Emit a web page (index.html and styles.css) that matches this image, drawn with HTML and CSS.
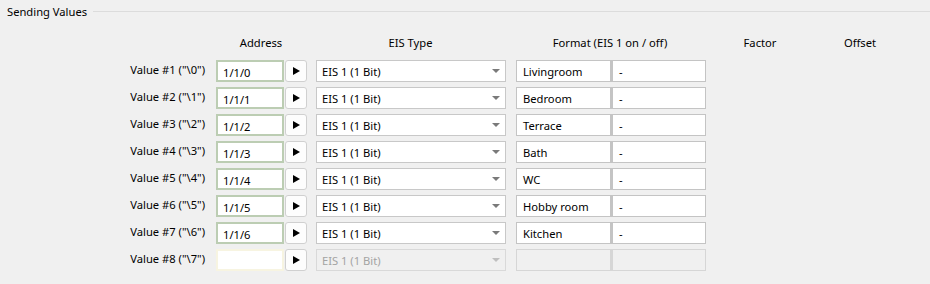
FILE: index.html
```html
<!DOCTYPE html>
<html lang="en">
<head>
  <meta charset="UTF-8">
  <title>Sending Values</title>
  <link rel="stylesheet" href="styles.css">
</head>
<body>
  <div class="group">
    <div class="group-title">
      <span>Sending Values</span>
      <div class="group-line"></div>
    </div>

    <div class="head-row">
      <div class="head-address">Address</div>
      <div class="head-eis">EIS Type</div>
      <div class="head-format">Format (EIS 1 on / off)</div>
      <div class="head-factor">Factor</div>
      <div class="head-offset">Offset</div>
    </div>

    <div class="row">
      <div class="label">Value #1 ("\0")</div>
      <div class="addr">1/1/0</div>
      <div class="send"><svg width="8" height="8" viewBox="0 0 8 8"><polygon points="1,0 8,4 1,8"/></svg></div>
      <div class="combo">EIS 1 (1 Bit)<span class="arrow"></span></div>
      <div class="fmt">Livingroom</div>
      <div class="fmt">-</div>
    </div>
    <div class="row">
      <div class="label">Value #2 ("\1")</div>
      <div class="addr">1/1/1</div>
      <div class="send"><svg width="8" height="8" viewBox="0 0 8 8"><polygon points="1,0 8,4 1,8"/></svg></div>
      <div class="combo">EIS 1 (1 Bit)<span class="arrow"></span></div>
      <div class="fmt">Bedroom</div>
      <div class="fmt">-</div>
    </div>
    <div class="row">
      <div class="label">Value #3 ("\2")</div>
      <div class="addr">1/1/2</div>
      <div class="send"><svg width="8" height="8" viewBox="0 0 8 8"><polygon points="1,0 8,4 1,8"/></svg></div>
      <div class="combo">EIS 1 (1 Bit)<span class="arrow"></span></div>
      <div class="fmt">Terrace</div>
      <div class="fmt">-</div>
    </div>
    <div class="row">
      <div class="label">Value #4 ("\3")</div>
      <div class="addr">1/1/3</div>
      <div class="send"><svg width="8" height="8" viewBox="0 0 8 8"><polygon points="1,0 8,4 1,8"/></svg></div>
      <div class="combo">EIS 1 (1 Bit)<span class="arrow"></span></div>
      <div class="fmt">Bath</div>
      <div class="fmt">-</div>
    </div>
    <div class="row">
      <div class="label">Value #5 ("\4")</div>
      <div class="addr">1/1/4</div>
      <div class="send"><svg width="8" height="8" viewBox="0 0 8 8"><polygon points="1,0 8,4 1,8"/></svg></div>
      <div class="combo">EIS 1 (1 Bit)<span class="arrow"></span></div>
      <div class="fmt">WC</div>
      <div class="fmt">-</div>
    </div>
    <div class="row">
      <div class="label">Value #6 ("\5")</div>
      <div class="addr">1/1/5</div>
      <div class="send"><svg width="8" height="8" viewBox="0 0 8 8"><polygon points="1,0 8,4 1,8"/></svg></div>
      <div class="combo">EIS 1 (1 Bit)<span class="arrow"></span></div>
      <div class="fmt">Hobby room</div>
      <div class="fmt">-</div>
    </div>
    <div class="row">
      <div class="label">Value #7 ("\6")</div>
      <div class="addr">1/1/6</div>
      <div class="send"><svg width="8" height="8" viewBox="0 0 8 8"><polygon points="1,0 8,4 1,8"/></svg></div>
      <div class="combo">EIS 1 (1 Bit)<span class="arrow"></span></div>
      <div class="fmt">Kitchen</div>
      <div class="fmt">-</div>
    </div>
    <div class="row">
      <div class="label">Value #8 ("\7")</div>
      <div class="addr empty"></div>
      <div class="send"><svg width="8" height="8" viewBox="0 0 8 8"><polygon points="1,0 8,4 1,8"/></svg></div>
      <div class="combo disabled">EIS 1 (1 Bit)<span class="arrow"></span></div>
      <div class="fmt disabled"></div>
      <div class="fmt disabled"></div>
    </div>
  </div>
</body>
</html>
```

FILE: styles.css
```css
body {
  margin: 0;
  background-color: #f0f0f0;
  font-family: "Noto Sans", "Open Sans", sans-serif;
  font-size: 11.2px;
  color: #000;
}

.group {
  padding-top: 3px;
}

.group-title {
  display: flex;
  align-items: center;
  height: 17px;
  padding-left: 7px;
}

.group-line {
  flex: 1;
  height: 1px;
  margin-left: 6px;
  background-color: #dcdcdc;
}

.head-row {
  display: flex;
  align-items: center;
  height: 20px;
  margin-top: 12px;
  margin-bottom: 8px;
  padding-left: 216px;
}

.head-address {
  width: 90px;
  text-align: center;
}

.head-eis {
  width: 189px;
  margin-left: 10px;
  text-align: center;
}

.head-format {
  width: 188px;
  margin-left: 11px;
  text-align: center;
}

.head-factor {
  width: 100px;
  margin-left: 6px;
  text-align: center;
}

.head-offset {
  width: 100px;
  text-align: center;
}

.row {
  display: flex;
  align-items: center;
  height: 22px;
  margin-bottom: 5px;
}

.label {
  width: 205px;
  padding-right: 11px;
  text-align: right;
  position: relative;
  top: -2px;
}

.addr {
  box-sizing: border-box;
  width: 68px;
  height: 22px;
  padding: 3px 0 0 5px;
  background-color: #fff;
  border: 2px solid #bccdb3;
}

.addr.empty {
  border-color: #f7f4e1;
}

.send {
  box-sizing: border-box;
  width: 22px;
  height: 22px;
  margin-left: 1px;
  display: flex;
  justify-content: center;
  align-items: center;
  background-color: #fdfdfd;
  border: 1px solid #d0d0d0;
  border-radius: 3px;
}

.combo {
  box-sizing: border-box;
  width: 190px;
  height: 22px;
  margin-left: 9px;
  padding: 3px 0 0 5px;
  background-color: #fff;
  border: 1px solid #c8c8c8;
  position: relative;
}

.arrow {
  position: absolute;
  right: 5px;
  top: 8px;
  border-left: 4px solid transparent;
  border-right: 4px solid transparent;
  border-top: 4px solid #7a7a7a;
}

.combo.disabled {
  background-color: #f0f0f0;
  border-color: #d9d9d9;
  color: #a3a3a3;
}

.combo.disabled .arrow {
  border-top-color: #bfbfbf;
}

.fmt {
  box-sizing: border-box;
  width: 95px;
  height: 22px;
  padding: 3px 0 0 6px;
  background-color: #fff;
  border: 1px solid #c4c4c4;
}

.combo + .fmt {
  margin-left: 10px;
}

.fmt + .fmt {
  border-left-width: 2px;
}

.fmt.disabled {
  background-color: #f0f0f0;
  border-color: #d6d6d6;
}
```
